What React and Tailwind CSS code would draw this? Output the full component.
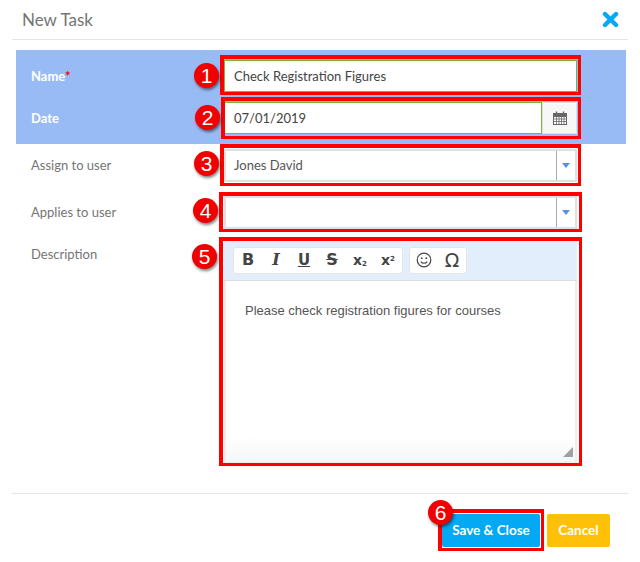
const CalendarIcon = () => (
  <svg width="14" height="14" viewBox="0 0 14 14" fill="none" stroke="#666" strokeWidth="1">
    <rect x="0.5" y="2.5" width="13" height="11" fill="#fff" />
    <rect x="0.5" y="2.5" width="13" height="3" fill="#666" />
    <path d="M3.5 5v8.5M6 5v8.5M8.5 5v8.5M11 5v8.5M.5 8h13M.5 10.5h13" strokeWidth="0.8" />
    <path d="M3.5 0.5v3M10.5 0.5v3" strokeWidth="1.4" />
  </svg>
);

const CloseIcon = () => (
  <svg width="17" height="17" viewBox="0 0 17 17">
    <path d="M3 3l11 11M14 3L3 14" stroke="#03a9f4" strokeWidth="4.4" strokeLinecap="round" />
  </svg>
);

const Caret = () => (
  <svg width="8" height="5" viewBox="0 0 8 5">
    <path d="M0 0h8L4 5z" fill="#5b8fe6" />
  </svg>
);

const Smile = () => (
  <svg width="16" height="16" viewBox="0 0 16 16" fill="none" stroke="#444" strokeWidth="1.2">
    <circle cx="8" cy="8" r="6.8" />
    <circle cx="5.7" cy="6.2" r="0.9" fill="#444" stroke="none" />
    <circle cx="10.3" cy="6.2" r="0.9" fill="#444" stroke="none" />
    <path d="M4.8 9.6c1.6 2.2 4.8 2.2 6.4 0" />
  </svg>
);

// numbered red marker laid over the screenshot
const Badge = ({ n, className }) => (
  <div
    className={`absolute w-[25px] h-[25px] rounded-full bg-[#f00000] text-white text-[21px] leading-[25px] text-center font-['Liberation_Sans',sans-serif] shadow-[1px_2px_3px_rgba(0,0,0,0.5)] ${className}`}
  >
    {n}
  </div>
);

const Tool = ({ children, className }) => (
  <span className={`w-[28px] h-[26px] flex items-center justify-center text-[#444] ${className || ''}`}>
    {children}
  </span>
);

const Row = ({ label, className, labelClass, children }) => (
  <div className={`flex ${className || ''}`}>
    <div className={`w-[208px] pl-[15px] text-[13px] ${labelClass || 'text-[#757575]'}`}>{label}</div>
    <div className="w-[353px]">{children}</div>
  </div>
);

const SelectBox = ({ value }) => (
  <div className="h-[33px] border-2 border-[#e0e0e0] flex items-center bg-white">
    <span className="flex-1 pl-[8px] text-[13px] text-[#555]">{value}</span>
    <span className="w-[19px] h-full border-l border-[#aaa] flex items-center justify-center pr-[1px]">
      <Caret />
    </span>
  </div>
);

export default function App() {
  return (
    <div className="relative w-[640px] h-[562px] bg-white overflow-hidden font-['Lato',sans-serif]">
      {/* Header */}
      <div className="mx-[12px] h-[40px] border-b border-[#e5e5e5] flex items-center justify-between pl-[10px] pr-[9px]">
        <h3 className="text-[17px] text-[#757575]">New Task</h3>
        <CloseIcon />
      </div>

      {/* Required fields */}
      <div className="mt-[10px] mx-[16px] w-[610px] h-[94px] bg-[#99bbf5] pt-[10px]">
        <Row label={<>Name<span className="text-[#e00]">*</span></>} labelClass="text-white font-bold leading-[32px]" className="h-[32px]">
          <div className="h-[32px] border border-[#7cb342] bg-white pl-[9px] text-[13px] leading-[30px] text-[#444]">
            Check Registration Figures
          </div>
        </Row>
        <Row label="Date" labelClass="text-white font-bold leading-[32px]" className="h-[32px] mt-[10px]">
          <div className="flex h-[32px]">
            <div className="w-[318px] border border-[#7cb342] bg-white pl-[9px] text-[13px] leading-[30px] text-[#444]">
              07/01/2019
            </div>
            <div className="flex-1 border border-[#e0e0e0] bg-[#f7f7f7] flex items-center justify-center">
              <CalendarIcon />
            </div>
          </div>
        </Row>
      </div>

      {/* Other fields */}
      <div className="mx-[16px] mt-[5px]">
        <Row label="Assign to user" labelClass="text-[#757575] leading-[32px]">
          <SelectBox value="Jones David" />
        </Row>
        <Row label="Applies to user" labelClass="text-[#757575] leading-[32px]" className="mt-[14px]">
          <SelectBox value="" />
        </Row>
        <Row label="Description" labelClass="text-[#757575] leading-[28px]" className="mt-[11px]">
          <div className="h-[224px] border-2 border-t-0 border-[#eeeeee] flex flex-col bg-white">
            <div className="h-[41px] -mx-[2px] bg-[#e3eefc] border-b border-[#dddddd] flex items-center gap-[6px] pl-[9px]">
              <div className="flex bg-white rounded-[3px] border border-[#e5e5e5] h-[27px] items-center">
                <Tool><span className="font-['DejaVu_Sans',sans-serif] font-bold text-[16px]">B</span></Tool>
                <Tool><span className="font-['DejaVu_Serif',serif] font-bold italic text-[16px]">I</span></Tool>
                <Tool><span className="font-['DejaVu_Sans',sans-serif] font-bold text-[15px] underline">U</span></Tool>
                <Tool><span className="font-['DejaVu_Sans',sans-serif] font-bold text-[16px] line-through">S</span></Tool>
                <Tool><span className="font-['DejaVu_Sans',sans-serif] font-bold text-[14px]">x<sub className="text-[7px]">2</sub></span></Tool>
                <Tool><span className="font-['DejaVu_Sans',sans-serif] font-bold text-[14px]">x<sup className="text-[7px]">2</sup></span></Tool>
              </div>
              <div className="flex bg-white rounded-[3px] border border-[#e5e5e5] h-[27px] items-center">
                <Tool><Smile /></Tool>
                <Tool><span className="font-['DejaVu_Sans',sans-serif] text-[19px]">Ω</span></Tool>
              </div>
            </div>
            <div className="flex-1 pl-[19px] pt-[21px] text-[13px] leading-[18px] text-[#555] font-['Liberation_Sans',sans-serif]">
              Please check registration figures for courses
            </div>
            <div className="relative h-[26px] bg-gradient-to-b from-white to-[#f6f6f6]">
              <svg className="absolute right-[2px] bottom-[5px]" width="10" height="10" viewBox="0 0 10 10">
                <path d="M10 0v10H0z" fill="#a0a0a0" />
              </svg>
            </div>
          </div>
        </Row>
      </div>

      {/* Footer */}
      <div className="mx-[12px] mt-[29px] border-t border-[#e5e5e5] pt-[20px] flex justify-end gap-[7px] pr-[18px]">
        <button className="w-[98px] h-[33px] rounded-[2px] bg-[#03a9f4] text-white text-[13.5px] font-bold">Save &amp; Close</button>
        <button className="w-[63px] h-[33px] rounded-[2px] bg-[#ffc107] text-white text-[13.5px] font-bold">Cancel</button>
      </div>

      {/* Annotation overlays */}
      <div className="absolute left-[220px] top-[55px] w-[361px] h-[40px] border-[3px] border-l-4 border-t-4 border-[#f00]" />
      <div className="absolute left-[221px] top-[97px] w-[360px] h-[42px] border-[3px] border-l-4 border-t-4 border-[#f00]" />
      <div className="absolute left-[220px] top-[144px] w-[361px] h-[42px] border-[3px] border-l-4 border-t-4 border-[#f00]" />
      <div className="absolute left-[219px] top-[192px] w-[363px] h-[40px] border-[3px] border-l-4 border-t-4 border-[#f00]" />
      <div className="absolute left-[219px] top-[237px] w-[363px] h-[229px] border-[3px] border-l-4 border-t-4 border-[#f00]" />
      <div className="absolute left-[438px] top-[509px] w-[106px] h-[42px] border-[3px] border-l-4 border-t-4 border-[#f00]" />
      <Badge n="1" className="left-[194px] top-[63px]" />
      <Badge n="2" className="left-[195px] top-[105px]" />
      <Badge n="3" className="left-[194px] top-[151px]" />
      <Badge n="4" className="left-[193px] top-[198px]" />
      <Badge n="5" className="left-[192px] top-[244px]" />
      <Badge n="6" className="left-[428px] top-[500px]" />
    </div>
  );
}
